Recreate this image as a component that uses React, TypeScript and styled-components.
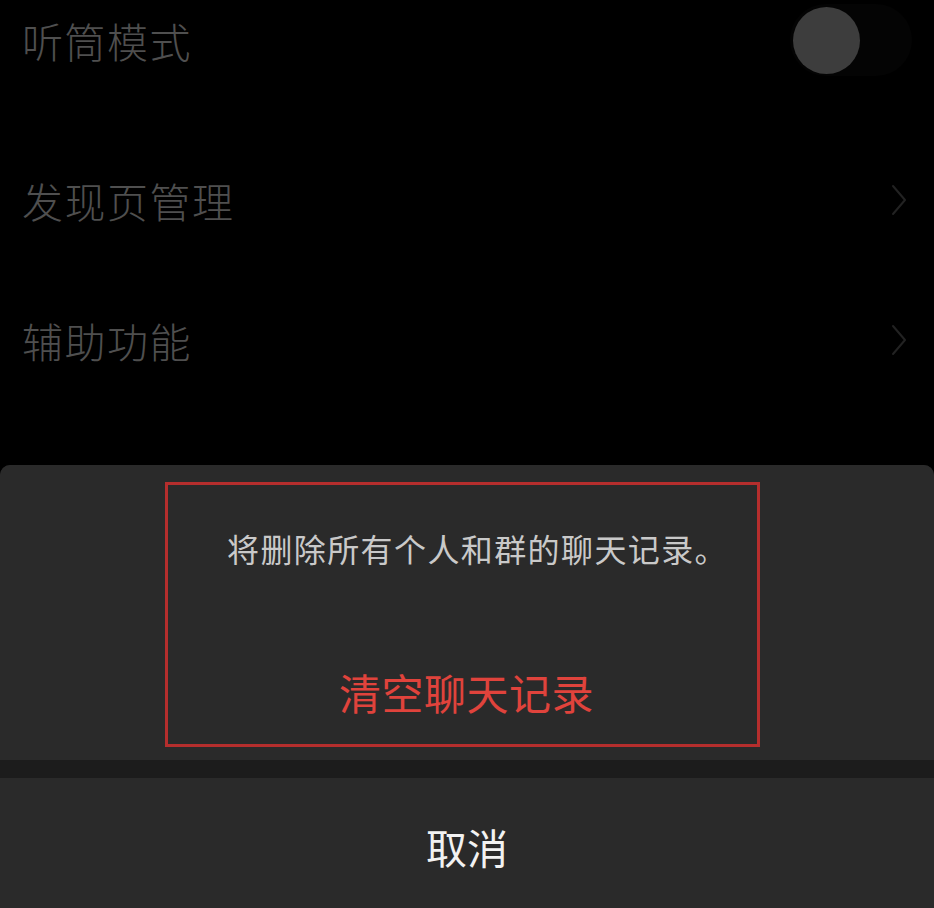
import React from "react";
import styled, { createGlobalStyle } from "styled-components";

const GlobalStyle = createGlobalStyle`
  html, body {
    margin: 0;
    padding: 0;
    background: #000;
  }
  body {
    font-family: "Noto Sans CJK SC", "Noto Sans", sans-serif;
  }
`;

const Page = styled.div`
  width: 934px;
  height: 908px;
  display: flex;
  flex-direction: column;
  background: #000;
  overflow: hidden;
`;

const SettingsList = styled.div`
  flex: 1;
  display: flex;
  flex-direction: column;
`;

const Row = styled.div<{ $height: number; $mt?: number }>`
  height: ${(p) => p.$height}px;
  margin-top: ${(p) => p.$mt ?? 0}px;
  display: flex;
  align-items: center;
  justify-content: space-between;
  padding: 0 22px 0 22px;
`;

const RowLabel = styled.span`
  font-size: 41px;
  font-weight: 300;
  color: #4f4f4f;
  letter-spacing: 1.5px;
`;

const Toggle = styled.div`
  width: 122px;
  height: 72px;
  border-radius: 36px;
  background: #040404;
  display: flex;
  align-items: center;
`;

const Knob = styled.div`
  width: 67px;
  height: 67px;
  margin-left: 3px;
  border-radius: 50%;
  background: #3d3d3d;
`;

const Chevron = styled.svg`
  width: 18px;
  height: 32px;
  margin-right: 4px;
`;

const Sheet = styled.div`
  height: 443px;
  display: flex;
  flex-direction: column;
  background: #1c1c1c;
  border-radius: 10px 10px 0 0;
  overflow: hidden;
`;

const ActionGroup = styled.div`
  height: 295px;
  background: #2a2a2a;
  padding: 17px 174px 0 165px;
  box-sizing: border-box;
`;

const Highlight = styled.div`
  height: 265px;
  border: 3px solid #b52e2d;
  box-sizing: border-box;
  display: flex;
  flex-direction: column;
  align-items: center;
`;

const Message = styled.div`
  margin-top: 43px;
  font-size: 32px;
  line-height: 40px;
  color: #c9c9c9;
  letter-spacing: 1.4px;
  padding-left: 30px;
`;

const Destructive = styled.div`
  margin-top: 99px;
  font-size: 42px;
  line-height: 50px;
  color: #e0433c;
  letter-spacing: 0.5px;
  padding-left: 8px;
`;

const CancelButton = styled.div`
  margin-top: 18px;
  flex: 1;
  background: #2a2a2a;
  display: flex;
  align-items: center;
  justify-content: center;
  font-size: 41px;
  color: #f2f2f2;
  padding-top: 6px;
`;

const ChevronIcon = () => (
  <Chevron viewBox="0 0 18 32" fill="none">
    <path d="M3 2 L15 16 L3 30" stroke="#222" strokeWidth="2" strokeLinecap="round" strokeLinejoin="round" />
  </Chevron>
);

export default function App() {
  return (
    <>
      <GlobalStyle />
      <Page>
        <SettingsList>
          <Row $height={80}>
            <RowLabel>听筒模式</RowLabel>
            <Toggle>
              <Knob />
            </Toggle>
          </Row>
          <Row $height={140} $mt={50}>
            <RowLabel>发现页管理</RowLabel>
            <ChevronIcon />
          </Row>
          <Row $height={140}>
            <RowLabel>辅助功能</RowLabel>
            <ChevronIcon />
          </Row>
        </SettingsList>
        <Sheet>
          <ActionGroup>
            <Highlight>
              <Message>将删除所有个人和群的聊天记录。</Message>
              <Destructive>清空聊天记录</Destructive>
            </Highlight>
          </ActionGroup>
          <CancelButton>取消</CancelButton>
        </Sheet>
      </Page>
    </>
  );
}
